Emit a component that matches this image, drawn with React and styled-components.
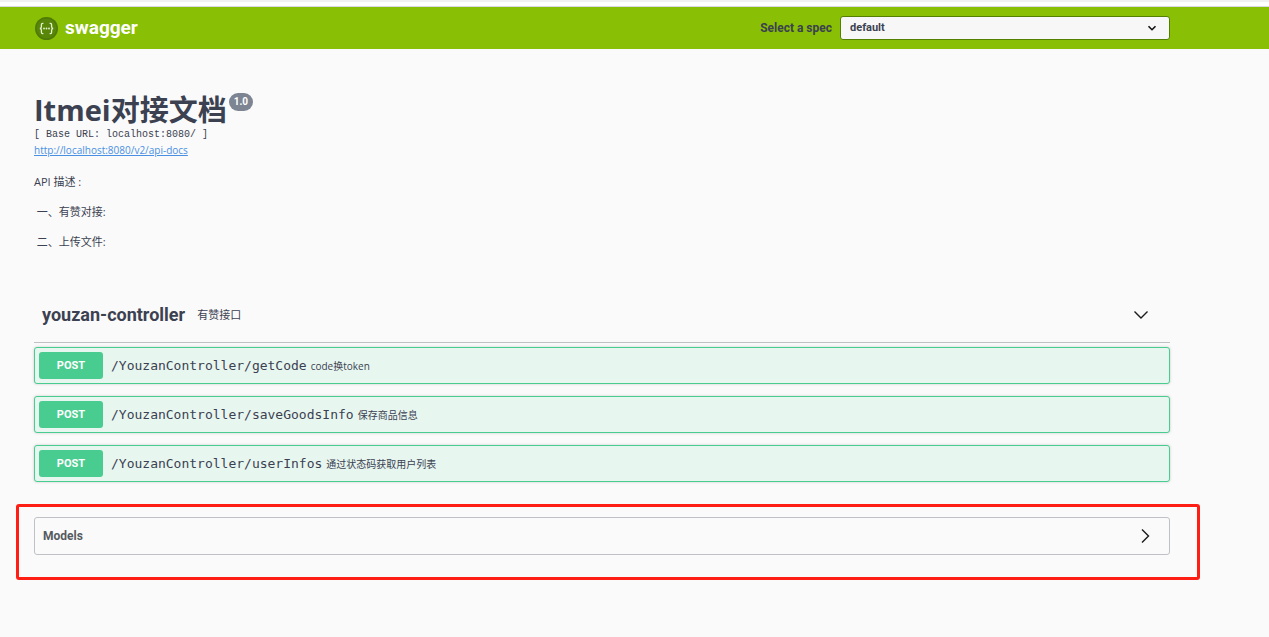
import { useState } from "react";
import styled, { createGlobalStyle } from "styled-components";

const sans = `"Open Sans", "Noto Sans CJK SC", sans-serif`;
const heading = `Roboto, "Noto Sans CJK SC", sans-serif`;
const mono = `"DejaVu Sans Mono", "Noto Sans CJK SC", monospace`;

const operations = [
  { method: "POST", path: "/YouzanController/getCode", summary: "code换token" },
  { method: "POST", path: "/YouzanController/saveGoodsInfo", summary: "保存商品信息" },
  { method: "POST", path: "/YouzanController/userInfos", summary: "通过状态码获取用户列表" },
];

const Arrow = ({ open }) => (
  <ArrowIcon viewBox="0 0 16 16" aria-hidden="true">
    <path d={open ? "M1.5 4.5 8 11l6.5-6.5" : "M5 1.5 11.5 8 5 14.5"} />
  </ArrowIcon>
);

const Logo = () => (
  <LogoLink href="#">
    <svg width="23" height="23" viewBox="0 0 23 23" aria-hidden="true">
      <circle cx="11.5" cy="11.5" r="11.5" fill="#4f7a07" />
      <circle cx="11.5" cy="11.5" r="10" fill="#578608" />
      <g fill="none" stroke="#e6f0d0" strokeWidth="1.3">
        <path d="M8.4 6.4H7.6Q6.4 6.4 6.4 7.7v2.1q0 1.7-1.6 1.7 1.6 0 1.6 1.7v2.1q0 1.3 1.2 1.3h.8" />
        <path d="M14.6 6.4h.8q1.2 0 1.2 1.3v2.1q0 1.7 1.6 1.7-1.6 0-1.6 1.7v2.1q0 1.3-1.2 1.3h-.8" />
      </g>
      <g fill="#e6f0d0">
        <circle cx="9" cy="11.5" r=".9" />
        <circle cx="11.5" cy="11.5" r=".9" />
        <circle cx="14" cy="11.5" r=".9" />
      </g>
    </svg>
    <span>swagger</span>
  </LogoLink>
);

export default function App() {
  const [tagOpen, setTagOpen] = useState(true);
  const [modelsOpen, setModelsOpen] = useState(false);

  return (
    <>
      <GlobalStyle />
      <BrowserEdge />
      <Topbar>
        <Logo />
        <SpecLabel htmlFor="spec">Select a spec</SpecLabel>
        <SelectBox>
          <Select id="spec" defaultValue="default">
            <option value="default">default</option>
          </Select>
          <SelectArrow viewBox="0 0 10 10" aria-hidden="true">
            <path d="M1.5 3.2 5 6.7l3.5-3.5" />
          </SelectArrow>
        </SelectBox>
      </Topbar>

      <main>
        <Info>
          <Title>
            Itmei对接文档<Version>1.0</Version>
          </Title>
          <BaseUrl>[ Base URL: localhost:8080/ ]</BaseUrl>
          <DocsLink href="http://localhost:8080/v2/api-docs">http://localhost:8080/v2/api-docs</DocsLink>
          <Description>
            <p>API 描述 :</p>
            <p>&nbsp;一、有赞对接:</p>
            <p>&nbsp;二、上传文件:</p>
          </Description>
        </Info>

        <Tag>
          <TagHeader aria-expanded={tagOpen} onClick={() => setTagOpen(!tagOpen)}>
            <TagName>youzan-controller</TagName>
            <TagText>有赞接口</TagText>
            <Arrow open={tagOpen} />
          </TagHeader>
          {tagOpen && (
            <Operations>
              {operations.map((op) => (
                <Operation key={op.path}>
                  <Method>{op.method}</Method>
                  <Path>{op.path}</Path>
                  <Summary>{op.summary}</Summary>
                </Operation>
              ))}
            </Operations>
          )}
        </Tag>

        <Highlight>
          <Models aria-expanded={modelsOpen} onClick={() => setModelsOpen(!modelsOpen)}>
            <span>Models</span>
            <Arrow open={modelsOpen} />
          </Models>
        </Highlight>
      </main>
    </>
  );
}

const GlobalStyle = createGlobalStyle`
  *, *::before, *::after {
    box-sizing: border-box;
  }

  body {
    margin: 0;
    background: #fafafa;
    color: #3b4151;
    font-family: ${sans};
  }

  button {
    color: inherit;
    text-align: left;
    cursor: pointer;
  }
`;

const BrowserEdge = styled.div`
  height: 7px;
  border-top: 2px solid #f1f1f1;
  border-bottom: 1px solid #d9dadf;
  background: #fff;
`;

const Topbar = styled.header`
  display: flex;
  align-items: center;
  height: 42px;
  padding: 0 99px 0 35px;
  background: #89bf04;
`;

const LogoLink = styled.a`
  display: flex;
  align-items: center;
  gap: 7px;
  margin-right: auto;
  color: #fff;
  font: 700 19px/24px ${heading};
  text-decoration: none;
`;

const SpecLabel = styled.label`
  margin-right: 8px;
  font: 700 12px/16px ${heading};
`;

const SelectBox = styled.div`
  display: grid;
  align-items: center;
  width: 30%;
  min-width: 200px;
  max-width: 330px;
`;

const Select = styled.select`
  grid-area: 1 / 1;
  width: 100%;
  height: 24px;
  padding: 0 32px 0 9px;
  border: 1px solid #547f00;
  border-radius: 3px;
  background: #f7f7f7;
  color: #3b4151;
  font: 700 11px/16px ${heading};
  appearance: none;
`;

const SelectArrow = styled.svg`
  grid-area: 1 / 1;
  justify-self: end;
  width: 10px;
  height: 10px;
  margin-right: 13px;
  fill: none;
  stroke: #111;
  stroke-width: 1.6;
  pointer-events: none;
`;

const Info = styled.section`
  padding: 43px 99px 0 34px;
`;

const Title = styled.h1`
  display: flex;
  align-items: flex-start;
  gap: 2px;
  margin: 0;
  font: 700 29px/36px ${sans};
`;

const Version = styled.small`
  margin-top: 1px;
  padding: 0 5px;
  border-radius: 9px;
  background: #7d8492;
  color: #fff;
  font: 700 10px/18px ${heading};
`;

const BaseUrl = styled.pre`
  margin: 0;
  font: 400 10px/14px "Liberation Mono", monospace;
`;

const DocsLink = styled.a`
  display: block;
  width: fit-content;
  color: #4990e2;
  font-size: 10px;
  line-height: 16px;
`;

const Description = styled.div`
  display: flex;
  flex-direction: column;
  gap: 14px;
  margin-top: 16px;
  font-size: 11px;
  line-height: 16px;

  p {
    margin: 0;
  }
`;

const Tag = styled.section`
  padding: 41px 99px 0 34px;
`;

const TagHeader = styled.button`
  display: flex;
  align-items: center;
  width: 100%;
  height: 52px;
  padding: 0 21px 3px 8px;
  border: 0;
  border-bottom: 1px solid #bfc0c3;
  background: none;
`;

const TagName = styled.span`
  margin-right: 12px;
  font: 700 18px/24px ${heading};
`;

const TagText = styled.span`
  flex: 1;
  font: 400 11px/16px ${sans};
`;

const ArrowIcon = styled.svg`
  width: 16px;
  height: 16px;
  fill: none;
  stroke: #1a1a1a;
  stroke-width: 1.4;
`;

const Operations = styled.div`
  display: flex;
  flex-direction: column;
  gap: 12px;
  padding-top: 4px;
`;

const Operation = styled.button`
  display: flex;
  align-items: center;
  height: 37px;
  padding: 0 4px;
  border: 1px solid #49cc90;
  border-radius: 3px;
  background: #e8f6f0;
  box-shadow: 0 0 3px rgba(0, 0, 0, 0.19);
`;

const Method = styled.span`
  width: 64px;
  border-radius: 3px;
  background: #49cc90;
  color: #fff;
  font: 700 11px/27px ${heading};
  text-align: center;
`;

const Path = styled.span`
  padding: 0 4px 0 8px;
  font: 400 13px/20px ${mono};
`;

const Summary = styled.span`
  font: 400 10px/16px ${sans};
`;

const Highlight = styled.section`
  margin: 22px 69px 0 16px;
  padding: 10px 27px 22px 15px;
  border: 3px solid #ff1e14;
  border-radius: 3px;
`;

const Models = styled.button`
  display: flex;
  align-items: center;
  justify-content: space-between;
  width: 100%;
  height: 38px;
  padding: 0 16px 0 8px;
  border: 1px solid #bfc1c6;
  border-radius: 3px;
  background: none;
  color: #555a60;
  font: 700 12px/16px ${heading};
`;
